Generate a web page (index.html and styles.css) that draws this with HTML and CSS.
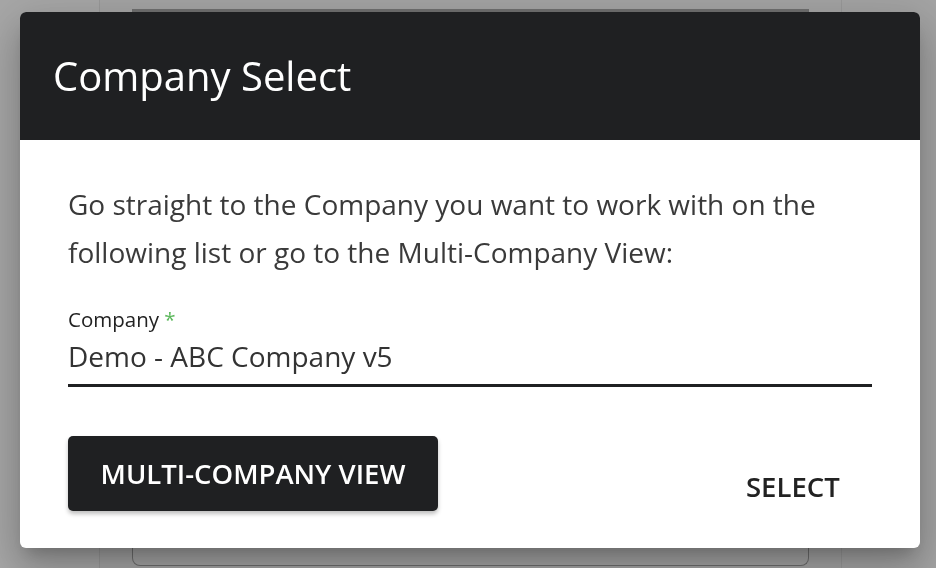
FILE: index.html
```html
<!DOCTYPE html>
<html lang="en">
<head>
<meta charset="utf-8">
<title>Company Select</title>
<link rel="stylesheet" href="styles.css">
</head>
<body>
<div class="page">
  <aside class="side"></aside>
  <main class="main">
    <div class="card"></div>
  </main>
  <aside class="side-right"></aside>
</div>
<div class="overlay">
  <div class="dialog" role="dialog" aria-labelledby="dlg-title">
    <header class="dialog-header">
      <h1 id="dlg-title" class="dialog-title">Company Select</h1>
    </header>
    <div class="dialog-body">
      <p class="intro">Go straight to the Company you want to work with on the following list or go to the Multi-Company View:</p>
      <div class="field">
        <label class="field-label">Company <span class="req">*</span></label>
        <div class="field-value">Demo - ABC Company v5</div>
      </div>
      <div class="actions">
        <button class="btn btn-dark">MULTI-COMPANY VIEW</button>
        <button class="btn btn-text">SELECT</button>
      </div>
    </div>
  </div>
</div>
</body>
</html>
```
FILE: styles.css
```css
* { box-sizing: border-box; }
html, body { margin: 0; padding: 0; }
body {
  width: 936px;
  height: 568px;
  overflow: hidden;
  background: #a4a4a4;
  font-family: "Open Sans", "Noto Sans", sans-serif;
}
.page {
  display: flex;
  height: 568px;
}
.side {
  width: 100px;
  background: #a7a7a7;
  border-right: 1px solid #999999;
}
.main {
  flex: 1;
  padding: 9px 32px 2px 32px;
  display: flex;
}
.card {
  flex: 1;
  border: 1px solid #6e6e6e;
  border-top: 3px solid #707070;
  border-radius: 0 0 8px 8px;
}
.side-right {
  width: 95px;
  border-left: 1px solid #999999;
}
.overlay {
  position: fixed;
  inset: 0;
  padding: 12px 0 0 20px;
}
.dialog {
  width: 900px;
  height: 536px;
  background: #ffffff;
  border-radius: 6px;
  overflow: hidden;
  display: flex;
  flex-direction: column;
  box-shadow: 0 11px 15px -7px rgba(0,0,0,.2), 0 24px 38px 3px rgba(0,0,0,.14), 0 9px 46px 8px rgba(0,0,0,.12);
}
.dialog-header {
  height: 128px;
  flex: none;
  background: #1f2022;
  display: flex;
  align-items: center;
  padding-left: 33px;
}
.dialog-title {
  margin: 0;
  color: #ffffff;
  font-size: 40px;
  font-weight: 400;
  line-height: 1;
}
.dialog-body {
  padding: 40px 48px 0 48px;
}
.intro {
  margin: 0;
  font-size: 28px;
  line-height: 48px;
  color: #3a3a3a;
}
.field {
  margin-top: 31px;
  border-bottom: 3px solid #1f2022;
}
.field-label {
  display: block;
  font-size: 20.5px;
  line-height: 24px;
  color: #222222;
}
.req { color: #5cb85c; }
.field-value {
  margin-top: 8px;
  padding-bottom: 11px;
  font-size: 28px;
  line-height: 34px;
  color: #333333;
}
.actions {
  margin-top: 49px;
  display: flex;
  justify-content: space-between;
  align-items: flex-start;
}
.btn {
  font-family: inherit;
  border: none;
  cursor: pointer;
  font-size: 27.5px;
  font-weight: 600;
}
.btn-dark {
  width: 370px;
  height: 75px;
  background: #1f2022;
  color: #ffffff;
  border-radius: 5px;
  box-shadow: 0 3px 4px rgba(0,0,0,.25);
}
.btn-text {
  background: transparent;
  color: #222222;
  margin-top: 24px;
  margin-right: 34px;
  padding: 0;
  height: 52px;
  width: 92px;
}
```
